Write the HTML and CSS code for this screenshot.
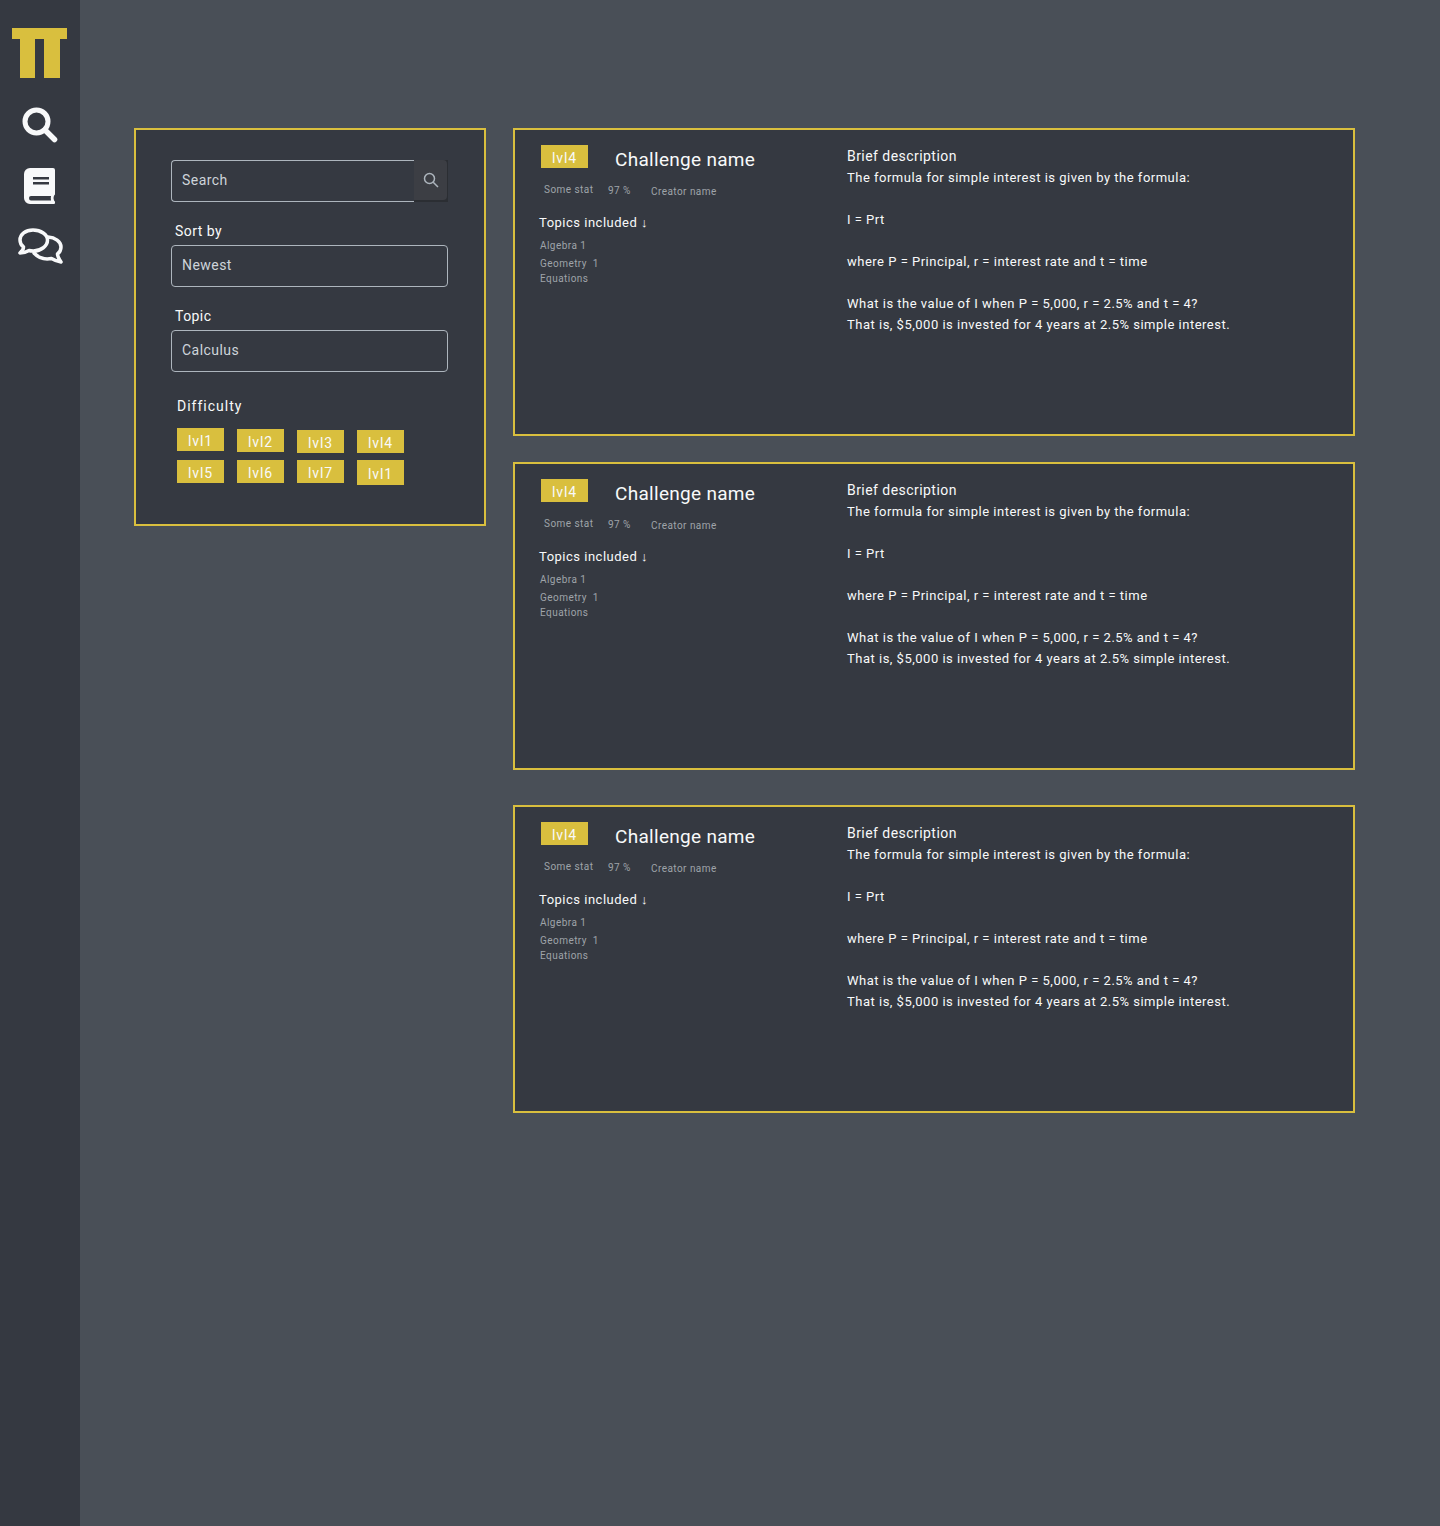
FILE: index.html
```html
<!DOCTYPE html>
<html lang="en">
<head>
    <meta charset="UTF-8">
    <title>Challenges</title>
    <link rel="stylesheet" href="styles.css">
</head>
<body>
    <nav class="sidebar">
        <svg class="logo" width="55" height="50" viewBox="0 0 55 50">
            <path fill="#d9bf3e" d="M0 0H55V11H48V50H32V11H23V50H8V11H0Z"/>
        </svg>
        <svg class="nav-icon nav-search" width="36" height="36" viewBox="0 0 36 36">
            <circle cx="14.5" cy="14.5" r="11.5" fill="none" stroke="#f8f9fa" stroke-width="5"/>
            <path d="M23 23L32.5 32.5" stroke="#f8f9fa" stroke-width="5.5" stroke-linecap="round"/>
        </svg>
        <svg class="nav-icon nav-book" width="32" height="36" viewBox="0 0 32 36">
            <path fill="#f8f9fa" fill-rule="evenodd" d="M6 0H29A2 2 0 0 1 31 2V26Q31 27 30 27.500Q29 30 30 32.500Q31 33 31 34V35A1 1 0 0 1 30 36H6A6 6 0 0 1 0 30V6A6 6 0 0 1 6 0ZM9 9V11.500H25V9ZM9 14V16.500H25V14ZM5 30Q5 32.500 7 32.500H27Q26.500 30 27 28H7Q5 28 5 30Z"/>
        </svg>
        <svg class="nav-icon nav-chat" width="45" height="36" viewBox="0 0 45 36">
            <g fill="none" stroke="#f8f9fa" stroke-width="3.500" stroke-linejoin="round" stroke-linecap="round">
                <path d="M15 2C7.500 2 2 6.500 2 12C2 15 3.500 17.500 5.500 19C5.500 21 4 23.500 2 25C5.500 25 8.500 24 11 22.500C12.500 23 14 23 15.500 23C23 23 29.500 18 29.500 12C29.500 6.500 23 2 15 2Z"/>
                <path d="M30 9C37 9.500 43 13.500 43 19C43 22 41.500 24.500 39.500 26C39.500 28.500 41 31 43 34C39.500 33.500 36 32 33.500 30.500C28 31.500 21 30.500 16 25"/>
            </g>
        </svg>
    </nav>

    <main class="content">
        <aside class="filters">
            <div class="search-box">
                <span class="search-text">Search</span>
                <span class="search-btn">
                    <span class="search-btn-inner">
                        <svg width="16" height="16" viewBox="0 0 16 16">
                            <circle cx="6.500" cy="6.500" r="5" fill="none" stroke="#adb5bd" stroke-width="1.500"/>
                            <path d="M10.200 10.200L15 15" stroke="#adb5bd" stroke-width="1.500"/>
                        </svg>
                    </span>
                </span>
            </div>
            <div class="filter-label">Sort by</div>
            <div class="select-box">Newest</div>
            <div class="filter-label">Topic</div>
            <div class="select-box">Calculus</div>
            <div class="filter-label difficulty-label">Difficulty</div>
            <div class="chip-grid">
                <span class="chip chip-up2">lvl1</span>
                <span class="chip chip-up1">lvl2</span>
                <span class="chip">lvl3</span>
                <span class="chip">lvl4</span>
                <span class="chip">lvl5</span>
                <span class="chip">lvl6</span>
                <span class="chip">lvl7</span>
                <span class="chip chip-tall">lvl1</span>
            </div>
        </aside>

        <section class="cards">
            <article class="card">
                <div class="card-left">
                    <div class="card-head">
                        <span class="chip">lvl4</span>
                        <h3>Challenge name</h3>
                    </div>
                    <div class="stats">
                        <span class="stat-name">Some stat</span>
                        <span class="stat-value">97 %</span>
                        <span class="stat-creator">Creator name</span>
                    </div>
                    <div class="topics-title">Topics included ↓</div>
                    <ul class="topics">
                        <li>Algebra 1</li>
                        <li>Geometry&nbsp; 1</li>
                        <li>Equations</li>
                    </ul>
                </div>
                <p class="description"><span class="description-title">Brief description</span><br>The formula for simple interest is given by the formula:<br><br>I = Prt<br><br>where P = Principal, r = interest rate and t = time<br><br>What is the value of I when P = 5,000, r = 2.5% and t = 4?<br>That is, $5,000 is invested for 4 years at 2.5% simple interest.</p>
            </article>
            <article class="card">
                <div class="card-left">
                    <div class="card-head">
                        <span class="chip">lvl4</span>
                        <h3>Challenge name</h3>
                    </div>
                    <div class="stats">
                        <span class="stat-name">Some stat</span>
                        <span class="stat-value">97 %</span>
                        <span class="stat-creator">Creator name</span>
                    </div>
                    <div class="topics-title">Topics included ↓</div>
                    <ul class="topics">
                        <li>Algebra 1</li>
                        <li>Geometry&nbsp; 1</li>
                        <li>Equations</li>
                    </ul>
                </div>
                <p class="description"><span class="description-title">Brief description</span><br>The formula for simple interest is given by the formula:<br><br>I = Prt<br><br>where P = Principal, r = interest rate and t = time<br><br>What is the value of I when P = 5,000, r = 2.5% and t = 4?<br>That is, $5,000 is invested for 4 years at 2.5% simple interest.</p>
            </article>
            <article class="card card-last">
                <div class="card-left">
                    <div class="card-head">
                        <span class="chip">lvl4</span>
                        <h3>Challenge name</h3>
                    </div>
                    <div class="stats">
                        <span class="stat-name">Some stat</span>
                        <span class="stat-value">97 %</span>
                        <span class="stat-creator">Creator name</span>
                    </div>
                    <div class="topics-title">Topics included ↓</div>
                    <ul class="topics">
                        <li>Algebra 1</li>
                        <li>Geometry&nbsp; 1</li>
                        <li>Equations</li>
                    </ul>
                </div>
                <p class="description"><span class="description-title">Brief description</span><br>The formula for simple interest is given by the formula:<br><br>I = Prt<br><br>where P = Principal, r = interest rate and t = time<br><br>What is the value of I when P = 5,000, r = 2.5% and t = 4?<br>That is, $5,000 is invested for 4 years at 2.5% simple interest.</p>
            </article>
        </section>
    </main>
</body>
</html>
```

FILE: styles.css
```css
body {
    margin: 0;
    min-height: 1526px;
    display: flex;
    background: #494f57;
    color: #f8f9fa;
    font-family: Roboto, "Noto Sans", sans-serif;
    font-size: 14px;
    letter-spacing: 0.45px;
}
.sidebar {
    width: 80px;
    flex-shrink: 0;
    background: #353941;
    display: flex;
    flex-direction: column;
    align-items: flex-start;
}
.logo {
    margin: 28px 0 0 12px;
}
.nav-search {
    margin: 29px 0 0 22px;
}
.nav-book {
    margin: 25px 0 0 24px;
}
.nav-chat {
    margin: 24px 0 0 18px;
}
.content {
    flex: 1;
    display: flex;
    align-items: flex-start;
    padding: 128px 85px 0 54px;
}
.filters {
    box-sizing: border-box;
    width: 352px;
    height: 398px;
    margin-right: 27px;
    padding: 30px 36px 0 35px;
    background: #353941;
    border: 2px solid #d9bf3e;
}
.search-box {
    display: flex;
    height: 42px;
    box-sizing: border-box;
    border: 1px solid #adb5bd;
    border-right: none;
    border-radius: 4px 0 0 4px;
    align-items: center;
    justify-content: space-between;
    padding-left: 10px;
    color: #ced4da;
}
.search-text {
    margin-top: -2px;
}
.search-btn {
    width: 34px;
    height: 42px;
    margin: -1px 0;
    background: #2b2e33;
}
.search-btn-inner {
    width: 33px;
    height: 40px;
    display: flex;
    align-items: center;
    justify-content: center;
    background: #3c3e44;
    border-radius: 0 4px 4px 0;
}
.filter-label {
    margin: 20px 0 1px 4px;
    height: 22px;
    line-height: 18px;
}
.select-box {
    box-sizing: border-box;
    height: 42px;
    line-height: 38px;
    padding-left: 10px;
    border: 1px solid #adb5bd;
    border-radius: 4px;
    color: #ced4da;
}
.difficulty-label {
    margin: 25px 0 0 6px;
    letter-spacing: 1px;
}
.chip-grid {
    display: grid;
    grid-template-columns: repeat(4, 47px);
    grid-auto-rows: 23px;
    gap: 9px 13px;
    margin: 0 0 0 6px;
    padding-top: 9px;
}
.chip {
    display: block;
    width: 47px;
    height: 23px;
    line-height: 27px;
    text-align: center;
    letter-spacing: 0.9px;
    background: #d9bf3e;
    color: #f8f9fa;
}
.chip-grid .chip {
    margin-top: 2px;
}
.chip-grid .chip-up2 {
    margin-top: 0;
}
.chip-grid .chip-up1 {
    margin-top: 1px;
}
.chip-grid .chip:nth-child(n+5) {
    margin-top: 0;
}
.chip-grid .chip-tall {
    height: 25px;
    line-height: 29px;
}
.cards {
    width: 842px;
}
.card {
    box-sizing: border-box;
    height: 308px;
    margin-bottom: 26px;
    padding: 15px 0 0 26px;
    display: flex;
    background: #353941;
    border: 2px solid #d9bf3e;
}
.card:nth-child(2) {
    margin-bottom: 35px;
}
.card-left {
    width: 306px;
    flex-shrink: 0;
}
.card-head {
    display: flex;
    align-items: center;
    height: 23px;
}
.card-head h3 {
    margin: 7px 0 0 27px;
    font-size: 19px;
    font-weight: 400;
    line-height: 30px;
    letter-spacing: 0.3px;
}
.stats {
    display: flex;
    font-size: 10px;
    color: #9fa4a9;
    margin: 16px 0 0 3px;
    height: 16px;
}
.stat-name {
    width: 64px;
}
.stat-value {
    width: 43px;
    margin-top: 1px;
}
.stat-creator {
    margin-top: 2px;
}
.topics-title {
    margin: 13px 0 0 -2px;
    font-size: 13px;
    letter-spacing: 0.5px;
    line-height: 20px;
}
.topics {
    list-style: none;
    margin: 5px 0 0 -1px;
    padding: 0;
    font-size: 10px;
    color: #9fa4a9;
}
.topics li {
    line-height: 15px;
}
.topics li:nth-child(2) {
    margin-top: 3px;
}
.description {
    margin: 0;
    padding-top: 1px;
    font-size: 13px;
    letter-spacing: 0.5px;
    line-height: 21px;
}
.description-title {
    font-size: 14px;
    letter-spacing: 0.45px;
}
```
